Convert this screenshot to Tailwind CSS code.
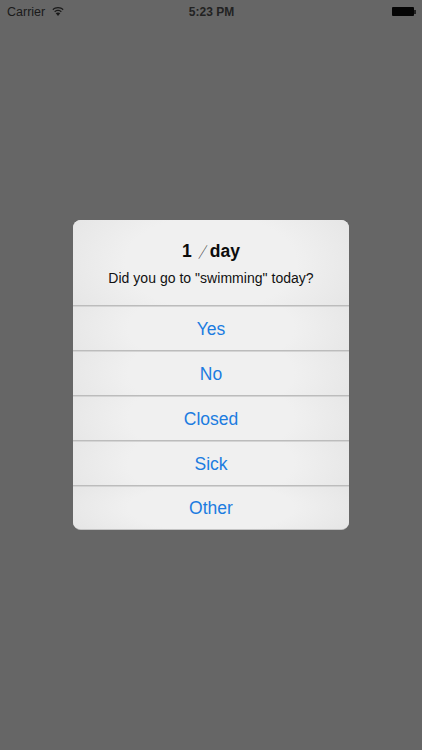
<html lang="en">
<head>
    <meta charset="UTF-8" />
    <meta name="viewport" content="width=device-width, initial-scale=1.0" />
    <title>Alert</title>
    <script src="https://cdn.jsdelivr.net/npm/@tailwindcss/browser@4"></script>
</head>
<body class="bg-[#666666] font-['Liberation_Sans',sans-serif]">
    <div class="w-[422px] h-[750px] flex flex-col overflow-hidden">
        <!-- Status bar -->
        <div class="h-[24px] grid grid-cols-3 items-center pl-[7px] pr-[6px] text-[#1a1a1a] text-[12.5px] leading-none">
            <div class="flex items-center gap-[7px]">
                <span>Carrier</span>
                <svg class="w-[12px] h-[9px] -mt-[1px]" viewBox="0 0 13 10" fill="#1a1a1a">
                    <path d="M6.5 0C4 0 1.9 1 .3 2.5l1 1.1C2.6 2.3 4.5 1.500 6.500 1.500s3.900.8 5.200 2.100l1-1.100C11.100 1 9 0 6.500 0z"/>
                    <path d="M6.500 3C4.800 3 3.400 3.700 2.300 4.700l1 1.100C4.100 5 5.200 4.500 6.500 4.500s2.400.5 3.200 1.300l1-1.100C9.600 3.700 8.200 3 6.500 3z"/>
                    <path d="M6.500 6c-1 0-1.900.4-2.500 1l2.500 3 2.500-3c-.6-.6-1.500-1-2.500-1z"/>
                </svg>
            </div>
            <div class="text-center font-bold text-[12px] text-[#222222]">5:23 PM</div>
            <div class="flex justify-end items-center -mt-[1px]">
                <div class="w-[22px] h-[9px] bg-[#050505] rounded-[1px]"></div>
                <div class="w-[2px] h-[4px] bg-[#222222]"></div>
            </div>
        </div>

        <!-- Alert -->
        <div class="ml-[73px] mt-[196px] w-[276px] h-[310px] rounded-[8px] overflow-hidden flex flex-col text-center bg-[#ebebeb] border-b border-[#c4c4c4]">
            <div class="h-[85px] pt-[21px] bg-[radial-gradient(ellipse_62%_110%_at_center,#f0f0f0_50%,#e4e4e4_100%)]">
                <h1 class="flex justify-center items-center text-[17.5px] leading-[21px] font-bold text-[#0c0c0c]">1<span class="inline-block w-[18px] text-[15px] font-normal text-[#222222] font-['Noto_Sans_CJK_JP',sans-serif] scale-x-[.62] translate-x-[2px]">／</span>day</h1>
                <p class="mt-[8px] text-[14px] tracking-[0.03px] leading-[17px] text-[#111111]">Did you go to "swimming" today?</p>
            </div>
            <div class="h-[45px] pt-[2px] flex items-center justify-center border-t border-[#bcbcbc] shadow-[inset_0_1px_0_#d4d4d4] text-[#1c7ce0] text-[17.5px] bg-[radial-gradient(ellipse_60%_170%_at_center,#f0f0f0_50%,#e4e4e4_100%)]">Yes</div>
            <div class="h-[45px] pt-[2px] flex items-center justify-center border-t border-[#bcbcbc] shadow-[inset_0_1px_0_#d4d4d4] text-[#1c7ce0] text-[17.5px] bg-[radial-gradient(ellipse_60%_170%_at_center,#f0f0f0_50%,#e4e4e4_100%)]">No</div>
            <div class="h-[45px] pt-[2px] flex items-center justify-center border-t border-[#bcbcbc] shadow-[inset_0_1px_0_#d4d4d4] text-[#1c7ce0] text-[17.5px] bg-[radial-gradient(ellipse_60%_170%_at_center,#f0f0f0_50%,#e4e4e4_100%)]">Closed</div>
            <div class="h-[45px] pt-[2px] flex items-center justify-center border-t border-[#bcbcbc] shadow-[inset_0_1px_0_#d4d4d4] text-[#1c7ce0] text-[17.5px] bg-[radial-gradient(ellipse_60%_170%_at_center,#f0f0f0_50%,#e4e4e4_100%)]">Sick</div>
            <div class="h-[44px] pt-[2px] flex items-center justify-center border-t border-[#bcbcbc] shadow-[inset_0_1px_0_#d4d4d4] text-[#1c7ce0] text-[17.5px] bg-[radial-gradient(ellipse_60%_110%_at_center,#f0f0f0_50%,#e4e4e4_100%)]">Other</div>
        </div>
    </div>
</body>
</html>
